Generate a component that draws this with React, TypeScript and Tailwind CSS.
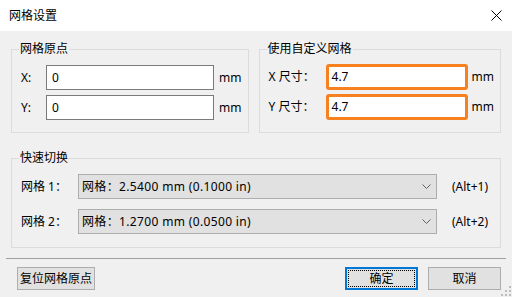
import React from 'react';

const font = { fontFamily: '"Noto Sans", "Noto Sans CJK SC", sans-serif' };

function Group({ title, className, children }: { title: string; className: string; children: React.ReactNode }) {
  return (
    <div className={`relative border border-[#dcdcdc] ${className}`}>
      <span className="absolute -top-[9px] left-[7px] bg-[#f0f0f0] px-[1px] text-[12px] leading-[16px]">{title}</span>
      {children}
    </div>
  );
}

function TextBox({ value, wide, focus }: { value: string; wide: string; focus?: boolean }) {
  if (focus) {
    return (
      <div className={`${wide} h-[26px] rounded-[3px] border-[3px] border-[#f7801f] bg-white flex items-center pl-[3px] text-[12px]`}>
        {value}
      </div>
    );
  }
  return (
    <div className={`${wide} h-[25px] border border-[#7a7a7a] bg-white flex items-center pl-[5px] text-[12px]`}>
      {value}
    </div>
  );
}

function Combo({ value }: { value: string }) {
  return (
    <div className="w-[359px] h-[25px] border border-[#adadad] bg-[#e1e1e1] flex items-center justify-between pl-[3px] pr-[4px] text-[12px]">
      <span className="tracking-[0.35px]">{value}</span>
      <svg width="9" height="5" viewBox="0 0 9 5" className="mr-[1px]">
        <path d="M0.5 0.5 L4.5 4.5 L8.5 0.5" fill="none" stroke="#606060" strokeWidth="1" />
      </svg>
    </div>
  );
}

export default function App() {
  return (
    <div className="relative w-[512px] h-[297px] bg-[#f0f0f0] overflow-hidden text-black" style={font}>
      {/* title bar */}
      <div className="h-[31px] bg-white flex items-center justify-between pl-[9px] pr-[10px]">
        <span className="text-[12px]">网格设置</span>
        <svg width="11" height="11" viewBox="0 0 11 11">
          <path d="M0.5 0.5 L10.5 10.5 M10.5 0.5 L0.5 10.5" stroke="#000" strokeWidth="1" />
        </svg>
      </div>

      <div className="px-[11px]">
        <div className="flex mt-[18px]">
          <Group title="网格原点" className="w-[240px] h-[84px] pt-[15px] pl-[9px]">
            <div className="flex flex-col gap-[5px]">
              <div className="flex items-center text-[12px]">
                <span className="w-[25px]">X:</span>
                <TextBox value="0" wide="w-[168px]" />
                <span className="ml-[5px]">mm</span>
              </div>
              <div className="flex items-center text-[12px]">
                <span className="w-[25px]">Y:</span>
                <TextBox value="0" wide="w-[168px]" />
                <span className="ml-[5px]">mm</span>
              </div>
            </div>
          </Group>
          <Group title="使用自定义网格" className="ml-[10px] w-[245px] h-[84px] pt-[14px] pl-[9px]">
            <div className="flex flex-col gap-[4px]">
              <div className="flex items-center text-[12px]">
                <span className="w-[57px]">X 尺寸：</span>
                <TextBox value="4.7" wide="w-[142px]" focus />
                <span className="ml-[4px]">mm</span>
              </div>
              <div className="flex items-center text-[12px]">
                <span className="w-[57px]">Y 尺寸：</span>
                <TextBox value="4.7" wide="w-[142px]" focus />
                <span className="ml-[4px]">mm</span>
              </div>
            </div>
          </Group>
        </div>

        <Group title="快速切换" className="mt-[25px] w-[490px] h-[90px] pt-[15px] pl-[9px]">
          <div className="flex flex-col gap-[10px]">
            <div className="flex items-center text-[12px]">
              <span className="w-[57px]">网格 1：</span>
              <Combo value="网格：2.5400 mm (0.1000 in)" />
              <span className="ml-[15px]">(Alt+1)</span>
            </div>
            <div className="flex items-center text-[12px]">
              <span className="w-[57px]">网格 2：</span>
              <Combo value="网格：1.2700 mm (0.0500 in)" />
              <span className="ml-[15px]">(Alt+2)</span>
            </div>
          </div>
        </Group>

        <div className="mt-[10px] -mx-[5px] h-[1px] bg-[#a0a0a0]" />

        <div className="mt-[8px] flex items-center text-[12px]">
          <button className="ml-[6px] w-[78px] h-[23px] border border-[#adadad] bg-[#e1e1e1] flex items-center justify-center">
            复位网格原点
          </button>
          <button className="relative ml-auto w-[73px] h-[23px] border-2 border-[#0078d7] bg-[#e1e1e1] flex items-center justify-center">
            <span className="absolute inset-[1px] border border-dotted border-black" />
            确定
          </button>
          <button className="ml-[10px] w-[73px] h-[23px] border border-[#adadad] bg-[#e1e1e1] flex items-center justify-center">
            取消
          </button>
        </div>
      </div>

      {/* resize grip */}
      <svg className="absolute right-[1px] bottom-[1px]" width="10" height="10" viewBox="0 0 10 10">
        <g fill="#bcbcbc">
          <rect x="8" y="0" width="2" height="2" />
          <rect x="4" y="4" width="2" height="2" />
          <rect x="8" y="4" width="2" height="2" />
          <rect x="0" y="8" width="2" height="2" />
          <rect x="4" y="8" width="2" height="2" />
          <rect x="8" y="8" width="2" height="2" />
        </g>
      </svg>
    </div>
  );
}
